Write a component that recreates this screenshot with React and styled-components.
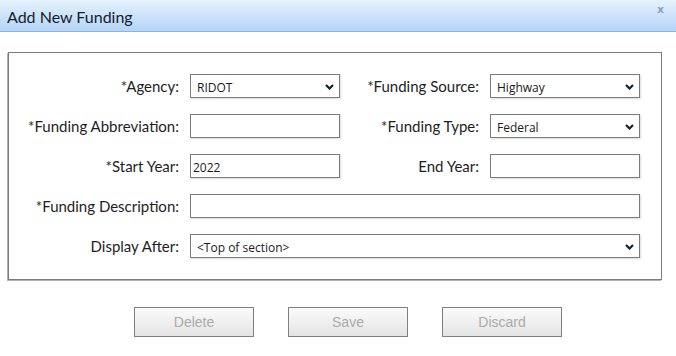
import styled, { createGlobalStyle } from "styled-components";

const GlobalStyle = createGlobalStyle`
  html, body {
    margin: 0;
    padding: 0;
    background: #fff;
  }
  body {
    font-family: Lato, "Open Sans", sans-serif;
    color: #1e1e1e;
  }
`;

const Dialog = styled.div`
  width: 676px;
  height: 356px;
  background: #fff;
  overflow: hidden;
`;

const TitleBar = styled.div`
  height: 32px;
  display: flex;
  align-items: center;
  justify-content: space-between;
  padding: 0 12px 0 7px;
  background: linear-gradient(#e6f2fd, #b3d5f7);
  border-bottom: 1px solid #8fb4d9;
  box-sizing: border-box;
`;

const Title = styled.h1`
  margin: 0;
  font-family: Lato, sans-serif;
  font-size: 16px;
  font-weight: 400;
  color: #16202c;
  padding-top: 1px;
`;

const Close = styled.span`
  font-family: "DejaVu Sans", sans-serif;
  font-size: 11px;
  font-weight: bold;
  color: #8ea3bb;
  margin-top: -12px;
`;

const Body = styled.div`
  padding: 20px 14px 0 8px;
`;

const FormBox = styled.div`
  border: 1px solid #7c7c7c;
  box-shadow: -1px 1px 0 #b0b0b0;
  padding: 21px 0 21px 0;
  width: 654px;
  box-sizing: border-box;
  display: grid;
  grid-template-columns: 170px 150px 128px 150px;
  column-gap: 11px;
  row-gap: 16px;
  align-items: center;
`;

const Label = styled.label`
  text-align: right;
  font-size: 15px;
  white-space: nowrap;
  color: #1e1e1e;
`;

const fieldBase = `
  box-sizing: border-box;
  width: 100%;
  height: 24px;
  border: 1px solid #7a7a7a;
  box-shadow: 1px 1px 2px #dcdcdc;
  background: #fff;
  font-family: "Open Sans", sans-serif;
  font-size: 12px;
  color: #1a1a1a;
  margin: 0;
  outline: none;
`;

const TextInput = styled.input`
  ${fieldBase}
  padding: 2px 2px 0;
`;

const SelectWrap = styled.div`
  position: relative;
  grid-column: ${(p) => (p.$wide ? "2 / 5" : "auto")};
`;

const WideInput = styled(TextInput)`
  grid-column: 2 / 5;
`;

const Select = styled.select`
  ${fieldBase}
  appearance: none;
  -webkit-appearance: none;
  padding: 2px 20px 0 6px;
  border-radius: 0;
`;

const Chevron = styled.svg`
  position: absolute;
  right: 6px;
  top: 10px;
  width: 9px;
  height: 6px;
  pointer-events: none;
`;

const ButtonRow = styled.div`
  display: flex;
  gap: 34px;
  padding: 27px 0 0 126px;
`;

const Button = styled.button`
  width: 120px;
  height: 30px;
  box-sizing: border-box;
  border: 1px solid #7f7f7f;
  background: linear-gradient(#fbfbfb, #e4e4e4);
  font-family: "Liberation Sans", Arial, sans-serif;
  font-size: 14px;
  color: #ababab;
  padding: 0;
`;

const Dropdown = ({ value, wide }) => (
  <SelectWrap $wide={wide}>
    <Select defaultValue={value}>
      <option>{value}</option>
    </Select>
    <Chevron viewBox="0 0 9 6">
      <path d="M1 1 L4.5 4.5 L8 1" fill="none" stroke="#16202c" strokeWidth="2.2" />
    </Chevron>
  </SelectWrap>
);

export default function App() {
  return (
    <Dialog>
      <GlobalStyle />
      <TitleBar>
        <Title>Add New Funding</Title>
        <Close>x</Close>
      </TitleBar>
      <Body>
        <FormBox>
          <Label>*Agency:</Label>
          <Dropdown value="RIDOT" />
          <Label>*Funding Source:</Label>
          <Dropdown value="Highway" />

          <Label>*Funding Abbreviation:</Label>
          <TextInput />
          <Label>*Funding Type:</Label>
          <Dropdown value="Federal" />

          <Label>*Start Year:</Label>
          <TextInput defaultValue="2022" />
          <Label>End Year:</Label>
          <TextInput />

          <Label>*Funding Description:</Label>
          <WideInput />

          <Label>Display After:</Label>
          <Dropdown value="<Top of section>" wide />
        </FormBox>
        <ButtonRow>
          <Button disabled>Delete</Button>
          <Button disabled>Save</Button>
          <Button disabled>Discard</Button>
        </ButtonRow>
      </Body>
    </Dialog>
  );
}
